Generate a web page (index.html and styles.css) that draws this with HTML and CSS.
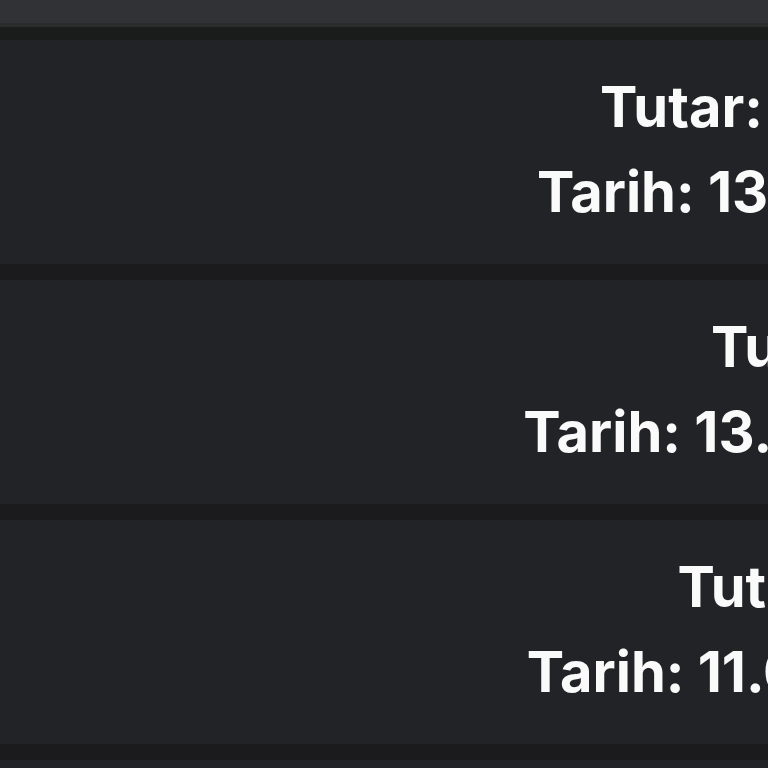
FILE: index.html
```html
<!DOCTYPE html>
<html lang="tr">
<head>
<meta charset="utf-8">
<title>İşlemler</title>
<link rel="stylesheet" href="styles.css">
</head>
<body>
<div class="page">
  <header class="topbar"></header>
  <main class="list">
    <section class="card">
      <div class="info">
        <div class="line">Tutar: 125.000,00 TL</div>
        <div class="line">Tarih: 13.05.2024 21:14</div>
      </div>
    </section>
    <section class="card">
      <div class="info">
        <div class="line">Tutar: 400,00 TL</div>
        <div class="line">Tarih: 13.05.2024 21:40</div>
      </div>
    </section>
    <section class="card">
      <div class="info">
        <div class="line">Tutar: 1.750,00 TL</div>
        <div class="line">Tarih: 11.05.2024 23:25</div>
      </div>
    </section>
    <section class="card">
      <div class="info">
        <div class="line">Tutar: 75,00 TL</div>
        <div class="line">Tarih: 10.05.2024 18:05</div>
      </div>
    </section>
  </main>
</div>
</body>
</html>
```
FILE: styles.css
```css
html, body {
  margin: 0;
  padding: 0;
  overflow: hidden;
  background: #1b1b1d;
}
.page {
  width: 1200px;
  height: 768px;
  overflow: hidden;
  background: #1a1b1b;
}
.topbar {
  height: 23px;
  background: #313236;
  border-bottom: 4px solid #2b2c2c;
}
.list {
  margin-top: 13px;
  display: flex;
  flex-direction: column;
  gap: 16px;
  background: #1b1b1d;
}
.card {
  background: #222327;
  height: 224px;
  box-sizing: border-box;
  padding: 25px 26.2px 29px 0;
}
.info {
  text-align: right;
  white-space: nowrap;
  color: #fafafa;
  font-family: "Inter", "Noto Sans", sans-serif;
  font-weight: 700;
  font-size: 56px;
  line-height: 85px;
}
```
